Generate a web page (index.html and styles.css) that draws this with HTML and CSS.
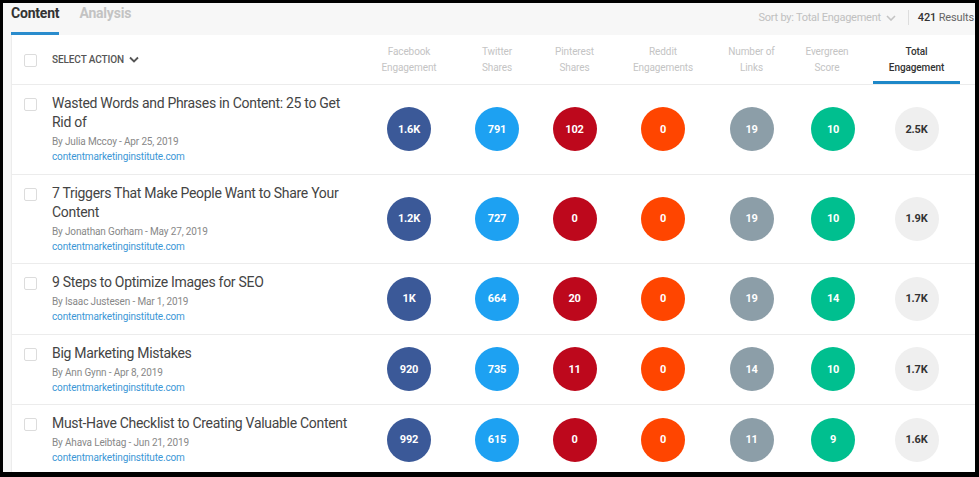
FILE: index.html
```html
<!DOCTYPE html>
<html>
<head>
<meta charset="utf-8">
<link rel="stylesheet" href="styles.css">
</head>
<body>
<div class="frame">
  <div class="topbar">
    <div class="tabs">
      <span class="tab active">Content</span>
      <span class="tab">Analysis</span>
    </div>
    <div class="tools">
      <span class="sort">Sort by: Total Engagement
        <svg class="chev" width="10" height="6" viewBox="0 0 10 6"><path d="M1 1 L5 5 L9 1" fill="none" stroke="#c4c4c4" stroke-width="1.6"/></svg>
      </span>
      <span class="sep"></span>
      <span class="results"><b>421</b> Results</span>
    </div>
  </div>
  <div class="card">
    <div class="row head">
      <div class="lead">
        <span class="box"></span>
        <span class="action">SELECT ACTION
          <svg class="chev" width="10" height="7" viewBox="0 0 10 7"><path d="M1 1.5 L5 5.5 L9 1.5" fill="none" stroke="#555" stroke-width="1.8"/></svg>
        </span>
      </div>
      <div class="hc">Facebook<br>Engagement</div>
      <div class="hc">Twitter<br>Shares</div>
      <div class="hc">Pinterest<br>Shares</div>
      <div class="hc">Reddit<br>Engagements</div>
      <div class="hc">Number of<br>Links</div>
      <div class="hc shift">Evergreen<br>Score</div>
      <div class="hc on">Total<br>Engagement</div>
      <div></div>
    </div>

    <div class="row">
      <div class="lead">
        <span class="box"></span>
        <div class="info">
          <div class="title">Wasted Words and Phrases in Content: 25 to Get Rid of</div>
          <div class="by">By Julia Mccoy - Apr 25, 2019</div>
          <div class="site">contentmarketinginstitute.com</div>
        </div>
      </div>
      <div class="c"><span class="dot fb">1.6K</span></div>
      <div class="c"><span class="dot tw">791</span></div>
      <div class="c"><span class="dot pi">102</span></div>
      <div class="c"><span class="dot rd">0</span></div>
      <div class="c"><span class="dot ln">19</span></div>
      <div class="c"><span class="dot ev">10</span></div>
      <div class="c"><span class="dot tt">2.5K</span></div>
      <div></div>
    </div>

    <div class="row">
      <div class="lead">
        <span class="box"></span>
        <div class="info">
          <div class="title">7 Triggers That Make People Want to Share Your Content</div>
          <div class="by">By Jonathan Gorham - May 27, 2019</div>
          <div class="site">contentmarketinginstitute.com</div>
        </div>
      </div>
      <div class="c"><span class="dot fb">1.2K</span></div>
      <div class="c"><span class="dot tw">727</span></div>
      <div class="c"><span class="dot pi">0</span></div>
      <div class="c"><span class="dot rd">0</span></div>
      <div class="c"><span class="dot ln">19</span></div>
      <div class="c"><span class="dot ev">10</span></div>
      <div class="c"><span class="dot tt">1.9K</span></div>
      <div></div>
    </div>

    <div class="row">
      <div class="lead">
        <span class="box"></span>
        <div class="info">
          <div class="title">9 Steps to Optimize Images for SEO</div>
          <div class="by">By Isaac Justesen - Mar 1, 2019</div>
          <div class="site">contentmarketinginstitute.com</div>
        </div>
      </div>
      <div class="c"><span class="dot fb">1K</span></div>
      <div class="c"><span class="dot tw">664</span></div>
      <div class="c"><span class="dot pi">20</span></div>
      <div class="c"><span class="dot rd">0</span></div>
      <div class="c"><span class="dot ln">19</span></div>
      <div class="c"><span class="dot ev">14</span></div>
      <div class="c"><span class="dot tt">1.7K</span></div>
      <div></div>
    </div>

    <div class="row">
      <div class="lead">
        <span class="box"></span>
        <div class="info">
          <div class="title">Big Marketing Mistakes</div>
          <div class="by">By Ann Gynn - Apr 8, 2019</div>
          <div class="site">contentmarketinginstitute.com</div>
        </div>
      </div>
      <div class="c"><span class="dot fb">920</span></div>
      <div class="c"><span class="dot tw">735</span></div>
      <div class="c"><span class="dot pi">11</span></div>
      <div class="c"><span class="dot rd">0</span></div>
      <div class="c"><span class="dot ln">14</span></div>
      <div class="c"><span class="dot ev">10</span></div>
      <div class="c"><span class="dot tt">1.7K</span></div>
      <div></div>
    </div>

    <div class="row">
      <div class="lead">
        <span class="box"></span>
        <div class="info">
          <div class="title">Must-Have Checklist to Creating Valuable Content</div>
          <div class="by">By Ahava Leibtag - Jun 21, 2019</div>
          <div class="site">contentmarketinginstitute.com</div>
        </div>
      </div>
      <div class="c"><span class="dot fb">992</span></div>
      <div class="c"><span class="dot tw">615</span></div>
      <div class="c"><span class="dot pi">0</span></div>
      <div class="c"><span class="dot rd">0</span></div>
      <div class="c"><span class="dot ln">11</span></div>
      <div class="c"><span class="dot ev">9</span></div>
      <div class="c"><span class="dot tt">1.6K</span></div>
      <div></div>
    </div>
  </div>
</div>
</body>
</html>
```
FILE: styles.css
```css
* { box-sizing: border-box; }
html, body { margin: 0; padding: 0; }
body {
  background: #000;
  width: 979px;
  height: 477px;
  overflow: hidden;
  font-family: Roboto, "Liberation Sans", sans-serif;
  padding: 3px 4px 5px 3px;
}
.frame {
  background: #f7f7f7;
  height: 469px;
  overflow: hidden;
  display: flex;
  flex-direction: column;
}
.topbar {
  height: 32px;
  flex: none;
  display: flex;
  justify-content: space-between;
  align-items: stretch;
  padding-left: 8px;
}
.tabs { display: flex; gap: 20px; align-items: stretch; }
.tab {
  font-size: 14px;
  font-weight: 700;
  color: #c3c3c3;
  letter-spacing: -0.2px;
  padding-top: 2px;
  border-bottom: 3px solid transparent;
}
.tab.active { color: #333; border-bottom-color: #2a8ccd; }
.tools {
  display: flex;
  align-items: center;
  font-size: 11px;
  padding-bottom: 3px;
  padding-right: 1px;
}
.sort { color: #c0c0c0; display: flex; align-items: center; gap: 5px; letter-spacing: -0.25px; }
.sep { width: 1px; height: 15px; background: #ddd; margin: 0 9px 0 12px; }
.results { color: #666; letter-spacing: -0.15px; }
.results b { color: #333; font-weight: 500; }
.card {
  margin-left: 8px;
  background: #fff;
  border-left: 1px solid #ececec;
  flex: 1;
}
.row {
  display: grid;
  grid-template-columns: 345px 104px 72px 83px 94px 83px 80px 87px 1fr;
  border-bottom: 1px solid #ececec;
}
.row.head { height: 50px; }
.lead {
  display: flex;
  align-items: flex-start;
  gap: 15px;
  padding: 9px 0 9.5px 12px;
}
.head .lead { align-items: center; padding: 0 0 0 12px; }
.box {
  flex: none;
  width: 13px;
  height: 13px;
  border: 1px solid #dcdcdc;
  border-radius: 2px;
  margin-top: 4px;
}
.head .box { margin-top: 1px; }
.action {
  font-size: 10px;
  font-weight: 500;
  color: #555;
  display: flex;
  align-items: center;
  gap: 5px;
  letter-spacing: -0.1px;
}
.hc {
  font-size: 10px;
  line-height: 16px;
  color: #c4c4c4;
  text-align: center;
  display: flex;
  align-items: center;
  justify-content: center;
  letter-spacing: -0.1px;
}
.hc.shift { padding-right: 12px; }
.hc.on {
  color: #333;
  font-weight: 500;
  border-bottom: 3px solid #1e88c8;
  padding-top: 3px;
}
.info { width: 305px; }
.title {
  font-size: 14px;
  line-height: 19px;
  color: #444;
  letter-spacing: -0.3px;
  margin-bottom: 2px;
}
.by, .site {
  font-size: 10px;
  line-height: 15px;
  letter-spacing: -0.15px;
}
.by { color: #888; }
.site { color: #3b97d6; }
.c { display: flex; align-items: center; justify-content: center; }
.dot {
  width: 44px;
  height: 44px;
  border-radius: 50%;
  display: flex;
  align-items: center;
  justify-content: center;
  color: #fff;
  font-size: 11px;
  font-weight: 700;
  letter-spacing: -0.2px;
}
.fb { background: #3b5998; }
.tw { background: #1da1f2; }
.pi { background: #bd081c; }
.rd { background: #ff4500; }
.ln { background: #8c9ea8; }
.ev { background: #00bf8f; }
.tt { background: #efefef; color: #333; }
```
